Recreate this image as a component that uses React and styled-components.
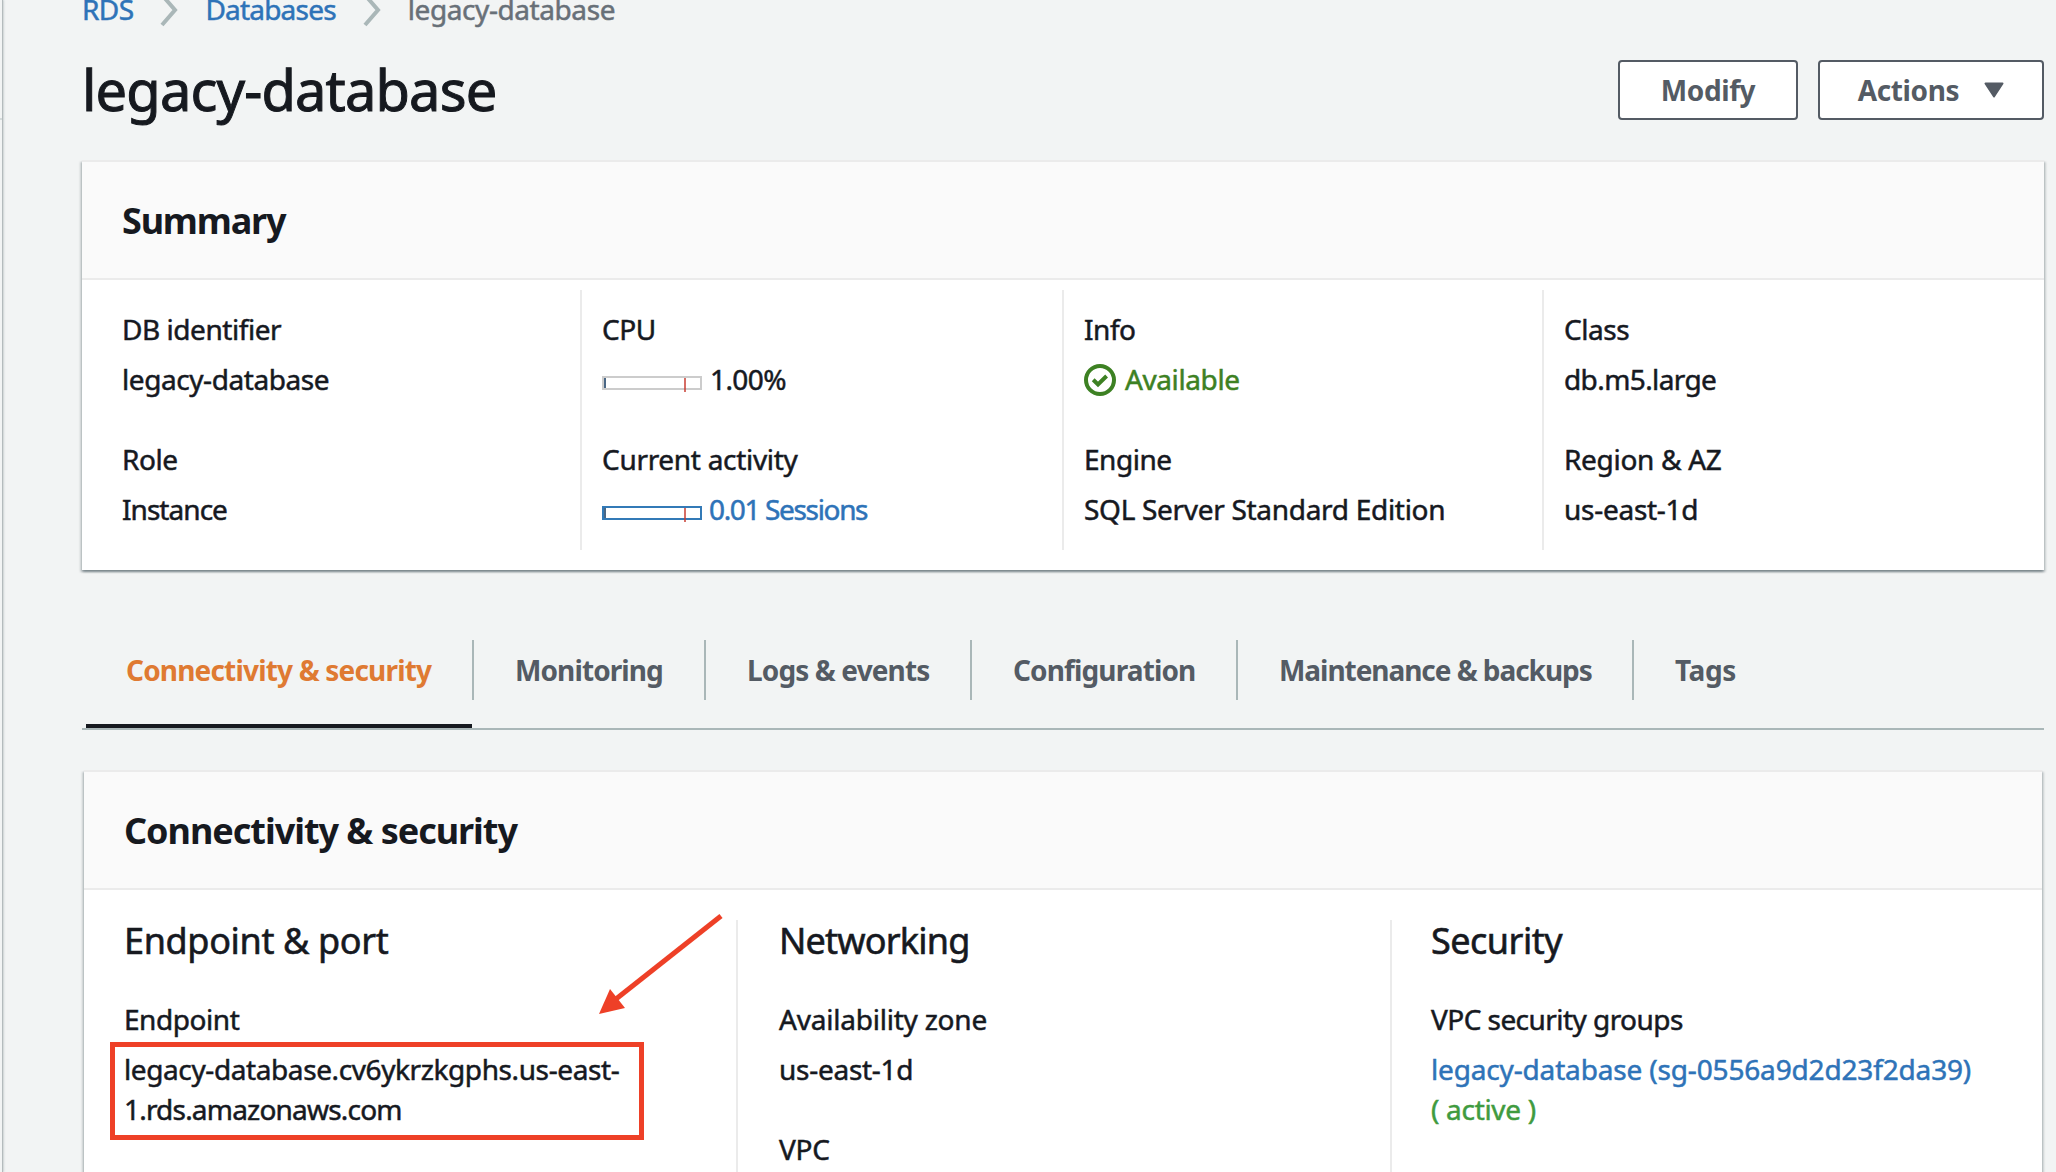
import React from 'react'
import styled, { createGlobalStyle } from 'styled-components';

const GlobalStyle = createGlobalStyle`
*{
    box-sizing:border-box;
}
body{
    margin:0;
    overflow:hidden;
    background:#f2f4f4;
    color:#16191f;
    font-family:"Noto Sans", "Open Sans", sans-serif;
    font-size:28px;
    line-height:40px;
}
`;

const summary = [
    [
        { label: 'DB identifier', value: 'legacy-database', track: '-0.43px' },
        { label: 'Role', value: 'Instance', track: '-0.95px' },
    ],
    [
        { label: 'CPU', value: '1.00%', meter: 'grey' },
        { label: 'Current activity', labelTrack: '-0.3px', value: '0.01 Sessions', track: '-1.35px', meter: 'blue' },
    ],
    [
        { label: 'Info', value: 'Available', status: true, track: '-0.4px' },
        { label: 'Engine', value: 'SQL Server Standard Edition', track: '-0.3px' },
    ],
    [
        { label: 'Class', value: 'db.m5.large' },
        { label: 'Region & AZ', labelTrack: '-0.3px', value: 'us-east-1d', track: '-0.27px' },
    ],
];

const tabs = [
    { label: 'Connectivity & security', width: '386px', track: '-0.82px' },
    { label: 'Monitoring', width: '232px', track: '-0.9px' },
    { label: 'Logs & events', width: '266px', track: '-0.87px' },
    { label: 'Configuration', width: '266px', track: '-0.87px' },
    { label: 'Maintenance & backups', width: '396px', track: '-1.05px' },
    { label: 'Tags', width: '142px', track: '-0.4px' },
];

function Chevron() {
    return (
        <ChevronIcon viewBox="0 0 20 36">
            <path d="M3 3 L16 18 L3 33" fill="none" stroke="#aab7b8" strokeWidth="4" />
        </ChevronIcon>
    )
}

function StatusIcon() {
    return (
        <StatusSvg viewBox="0 0 16 16">
            <circle cx="8" cy="8" r="7" />
            <path d="M4.6 7.9L7 10.2L11.3 6" />
        </StatusSvg>
    )
}

function Field({ item }) {
    return (
        <FieldBox>
            <Text $track={item.labelTrack || '-0.45px'}>{item.label}</Text>
            <ValueRow $gap={item.status ? '9px' : item.meter === 'blue' ? '7px' : '8px'}>
                {item.meter && <Meter $blue={item.meter === 'blue'} />}
                {item.status && <StatusIcon />}
                <Text
                    $track={item.track}
                    $color={item.status ? '#3d8123' : item.meter === 'blue' ? '#2e73b8' : undefined}
                >
                    {item.value}
                </Text>
            </ValueRow>
        </FieldBox>
    )
}

export default function App() {
    return (
        <Page>
            <GlobalStyle />
            <Sidebar />
            <Main>
                <Breadcrumbs>
                    <Text $color="#2e73b8">RDS</Text>
                    <Chevron />
                    <Text $color="#2e73b8" $track="-0.8px">Databases</Text>
                    <Chevron />
                    <Text $color="#687078" $track="-0.42px">legacy-database</Text>
                </Breadcrumbs>
                <TitleRow>
                    <Title>legacy-database</Title>
                    <Button $width="180px">Modify</Button>
                    <Button $width="226px">
                        Actions
                        <CaretDown viewBox="0 0 20 16">
                            <path d="M1.5 1.5H18.5L10 14.5Z" />
                        </CaretDown>
                    </Button>
                </TitleRow>

                <Card>
                    <CardHeader $track="-1.2px">Summary</CardHeader>
                    <SummaryGrid>
                        {summary.map((col, i) => (
                            <SummaryColumn key={i}>
                                {col.map(item => <Field key={item.label} item={item} />)}
                            </SummaryColumn>
                        ))}
                    </SummaryGrid>
                </Card>

                <TabBar>
                    {tabs.map((tab, i) => (
                        <Tab key={tab.label} $active={i === 0} $width={tab.width}>
                            <TabLabel $active={i === 0} $track={tab.track}>{tab.label}</TabLabel>
                        </Tab>
                    ))}
                </TabBar>

                <Card $inset>
                    <CardHeader>Connectivity &amp; security</CardHeader>
                    <DetailGrid>
                        <DetailColumn>
                            <Heading $track="-0.35px">Endpoint &amp; port</Heading>
                            <Text $track="-0.45px">Endpoint</Text>
                            <Value>
                                <Text $track="-0.4px">legacy-database.cv6ykrzkgphs.us-east-</Text>
                                <Text $track="-0.8px">1.rds.amazonaws.com</Text>
                                <Highlight />
                                <Arrow width="126" height="104" viewBox="0 0 126 104">
                                    <path d="M123 3L18 86" stroke="#ee4027" strokeWidth="5" />
                                    <path d="M1 101L12 76L27 95Z" fill="#ee4027" />
                                </Arrow>
                            </Value>
                        </DetailColumn>
                        <DetailColumn $pad="41px">
                            <Heading $track="-0.8px">Networking</Heading>
                            <Text $track="-0.22px">Availability zone</Text>
                            <Value><Text $track="-0.27px">us-east-1d</Text></Value>
                            <NextField><Text $track="-0.2px">VPC</Text></NextField>
                        </DetailColumn>
                        <DetailColumn>
                            <Heading $track="-0.5px">Security</Heading>
                            <Text $track="-0.55px">VPC security groups</Text>
                            <Value>
                                <Text $color="#2e73b8" $track="-0.16px">legacy-database (sg-0556a9d2d23f2da39)</Text>
                                <Text $color="#3f9b3f" $track="-0.3px">( active )</Text>
                            </Value>
                        </DetailColumn>
                    </DetailGrid>
                </Card>
            </Main>
        </Page>
    )
}

const Page = styled.div`
display:flex;
height:1172px;
overflow:hidden;
`;

const Sidebar = styled.aside`
width:3px;
border-right:1px solid #b4bbbd;
box-shadow:1px 0 2px #ccd2d3;
&::before{
    content:"";
    display:block;
    margin-top:118px;
    height:2px;
    background:#d5dbdb;
}
`;

const Main = styled.main`
flex:1;
min-width:0;
padding:0 12px 0 79px;
`;

const Text = styled.span`
display:block;
white-space:nowrap;
color:${props => props.$color || '#16191f'};
letter-spacing:${props => props.$track || '-0.6px'};
-webkit-text-stroke:0.5px;
`;

const Breadcrumbs = styled.nav`
display:flex;
height:31px;
margin-top:-11px;
`;

const ChevronIcon = styled.svg`
width:20px;
height:36px;
margin:3px 26px 0 26px;
`;

const TitleRow = styled.div`
display:flex;
align-items:center;
gap:20px;
height:140px;
`;

const Title = styled.h1`
flex:1;
margin:0 0 3px;
font-size:56px;
font-weight:400;
letter-spacing:-0.85px;
-webkit-text-stroke:1px;
`;

const Button = styled.button`
display:flex;
align-items:center;
justify-content:center;
gap:25px;
width:${props => props.$width};
height:60px;
padding:0;
border:2px solid #545b64;
border-radius:4px;
background:#fff;
color:#545b64;
font:700 28px "Noto Sans", sans-serif;
letter-spacing:-0.4px;
`;

const CaretDown = styled.svg`
width:20px;
height:16px;
fill:#545b64;
stroke:#545b64;
stroke-width:2;
stroke-linejoin:round;
`;

const Card = styled.section`
margin:0 ${props => (props.$inset ? '2px' : '0')};
border-top:2px solid #ebebeb;
background:#fff;
box-shadow:0 2px 2px rgba(0,28,36,.3), 2px 2px 2px rgba(0,28,36,.15), -2px 2px 2px rgba(0,28,36,.15);
`;

const CardHeader = styled.h2`
height:118px;
margin:0;
padding:39px 40px;
border-bottom:2px solid #ebebeb;
background:#fafafa;
font-size:36px;
font-weight:700;
letter-spacing:${props => props.$track || '-1.03px'};
`;

const SummaryGrid = styled.div`
display:grid;
grid-template-columns:480px 482px 480px 1fr;
height:290px;
padding:10px 0 20px 18px;
`;

const SummaryColumn = styled.div`
display:flex;
flex-direction:column;
gap:40px;
padding:19px 20px;
border-left:2px solid #ebebeb;
&:first-child{
    border-left-color:transparent;
}
`;

const FieldBox = styled.div`
display:flex;
flex-direction:column;
gap:10px;
`;

const ValueRow = styled.div`
display:flex;
align-items:center;
gap:${props => props.$gap};
height:40px;
`;

const StatusSvg = styled.svg`
width:32px;
height:32px;
margin-top:2px;
fill:none;
stroke:#3d8123;
stroke-width:2;
`;

const Meter = styled.span`
position:relative;
width:100px;
height:14px;
margin-top:8px;
border:2px solid ${props => (props.$blue ? '#337ab7' : '#ccc')};
background:linear-gradient(90deg, #4a6785 2px, transparent 2px);
/* threshold tick, hangs over the bottom border */
&::after{
    content:"";
    position:absolute;
    left:80px;
    top:0;
    width:2px;
    height:14px;
    background:rgba(200,60,50,.75);
}
`;

const TabBar = styled.nav`
display:flex;
height:90px;
margin-top:70px;
margin-bottom:40px;
border-bottom:2px solid #aab7b8;
padding-left:4px;
`;

const Tab = styled.div`
width:${props => props.$width};
height:88px;
border-bottom:4px solid ${props => (props.$active ? '#16191f' : 'transparent')};
`;

const TabLabel = styled.span`
display:block;
height:60px;
padding:10px 0 10px ${props => (props.$active ? '40px' : '41px')};
border-left:${props => (props.$active ? '0' : '2px solid #aab7b8')};
color:${props => (props.$active ? '#df7a32' : '#545b64')};
font-weight:700;
white-space:nowrap;
letter-spacing:${props => props.$track};
`;

const DetailGrid = styled.div`
display:grid;
grid-template-columns:652px 654px 1fr;
height:290px;
padding-top:30px;
`;

const DetailColumn = styled.div`
padding:1px 40px 0 ${props => props.$pad || '40px'};
border-left:2px solid #ebebeb;
&:first-child{
    border-left:0;
}
&:last-child{
    padding-left:39px;
}
`;

const Heading = styled.h3`
margin:0 0 38px;
font-size:36px;
font-weight:400;
letter-spacing:${props => props.$track};
-webkit-text-stroke:0.6px;
`;

const Value = styled.div`
position:relative;
padding-top:10px;
`;

const NextField = styled.div`
margin-top:40px;
`;

// annotation frame drawn over the endpoint text
const Highlight = styled.div`
position:absolute;
left:-14px;
top:3px;
width:534px;
height:98px;
border:5px solid #ee4027;
`;

const Arrow = styled.svg`
position:absolute;
left:474px;
top:-126px;
`;
